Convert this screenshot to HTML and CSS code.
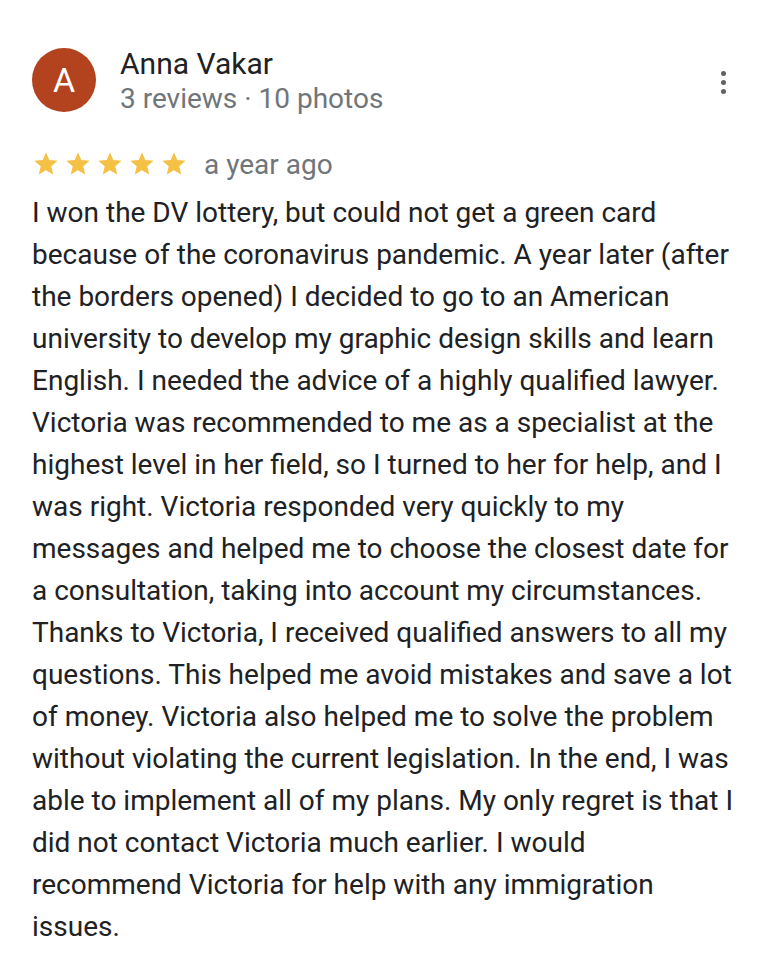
FILE: index.html
```html
<!DOCTYPE html>
<html>
<head>
<meta charset="utf-8">
<link rel="stylesheet" href="styles.css">
</head>
<body>
<div class="review">
  <div class="header">
    <div class="avatar">A</div>
    <div class="author">
      <div class="name">Anna Vakar</div>
      <div class="meta">3 reviews · 10 photos</div>
    </div>
    <div class="menu">
      <span class="dot"></span><span class="dot"></span><span class="dot"></span>
    </div>
  </div>
  <div class="rating">
    <div class="stars">
      <svg viewBox="0 0 24 24" class="star"><path d="M12 17.27L18.18 21l-1.64-7.03L22 9.24l-7.19-.61L12 2 9.19 8.63 2 9.24l5.46 4.73L5.82 21z"/></svg>
      <svg viewBox="0 0 24 24" class="star"><path d="M12 17.27L18.18 21l-1.64-7.03L22 9.24l-7.19-.61L12 2 9.19 8.63 2 9.24l5.46 4.73L5.82 21z"/></svg>
      <svg viewBox="0 0 24 24" class="star"><path d="M12 17.27L18.18 21l-1.64-7.03L22 9.24l-7.19-.61L12 2 9.19 8.63 2 9.24l5.46 4.73L5.82 21z"/></svg>
      <svg viewBox="0 0 24 24" class="star"><path d="M12 17.27L18.18 21l-1.64-7.03L22 9.24l-7.19-.61L12 2 9.19 8.63 2 9.24l5.46 4.73L5.82 21z"/></svg>
      <svg viewBox="0 0 24 24" class="star"><path d="M12 17.27L18.18 21l-1.64-7.03L22 9.24l-7.19-.61L12 2 9.19 8.63 2 9.24l5.46 4.73L5.82 21z"/></svg>
    </div>
    <span class="date">a year ago</span>
  </div>
  <p class="text">I won the DV lottery, but could not get a green card because of the coronavirus pandemic. A year later (after the borders opened) I decided to go to an American university to develop my graphic design skills and learn English. I needed the advice of a highly qualified lawyer. Victoria was recommended to me as a specialist at the highest level in her field, so I turned to her for help, and I was right. Victoria responded very quickly to my messages and helped me to choose the closest date for a consultation, taking into account my circumstances. Thanks to Victoria, I received qualified answers to all my questions. This helped me avoid mistakes and save a lot of money. Victoria also helped me to solve the problem without violating the current legislation. In the end, I was able to implement all of my plans. My only regret is that I did not contact Victoria much earlier. I would recommend Victoria for help with any immigration issues.</p>
</div>
</body>
</html>
```

FILE: styles.css
```css
html, body {
  margin: 0;
  padding: 0;
  background: #ffffff;
}
body {
  font-family: Roboto, "Noto Sans", Arial, sans-serif;
}
.review {
  padding: 32px 32px 0 32px;
}
.header {
  display: flex;
  align-items: flex-start;
}
.avatar {
  width: 64px;
  height: 64px;
  border-radius: 50%;
  background: #b3421f;
  color: #ffffff;
  font-size: 34px;
  display: flex;
  align-items: center;
  justify-content: center;
  flex-shrink: 0;
  margin-top: 16px;
}
.author {
  margin-left: 24px;
  flex: 1;
}
.name {
  font-size: 30px;
  line-height: 36px;
  color: #202124;
  margin-top: 14px;
}
.meta {
  font-size: 28px;
  line-height: 34px;
  color: #70757a;
}
.menu {
  display: flex;
  flex-direction: column;
  gap: 4px;
  margin-top: 39px;
  margin-right: 20px;
}
.dot {
  width: 5px;
  height: 5px;
  border-radius: 50%;
  background: #5f6368;
}
.rating {
  display: flex;
  align-items: center;
  margin-top: 28px;
  height: 40px;
}
.stars {
  display: flex;
  gap: 4px;
}
.star {
  width: 28px;
  height: 28px;
  fill: #f4c145;
}
.date {
  font-size: 28px;
  color: #70757a;
  margin-left: 16px;
}
.text {
  margin: 8px 0 0 0;
  max-width: 705px;
  font-size: 28px;
  line-height: 42px;
  color: #202124;
}
```
